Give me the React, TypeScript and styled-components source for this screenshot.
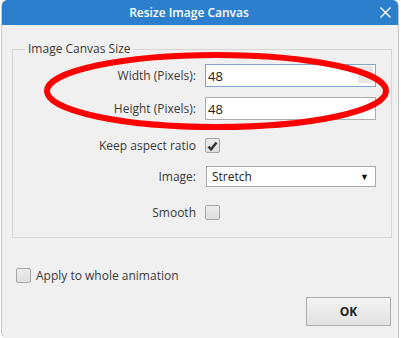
import React from "react";
import styled, { createGlobalStyle } from "styled-components";

const Global = createGlobalStyle`
  html, body { margin: 0; padding: 0; background: #ffffff; }
  body { font-family: "Open Sans", "Noto Sans", sans-serif; }
  * { box-sizing: border-box; }
`;

const Stage = styled.div`
  position: relative;
  width: 401px;
  height: 338px;
  overflow: hidden;
  background: #ffffff;
`;

const Window = styled.div`
  margin-left: 1px;
  width: 398px;
  height: 338px;
  background: #f0f0f0;
  border-left: 1px solid #c9c9c9;
  border-right: 1px solid #c4c4c4;
  border-radius: 6px 6px 0 6px;
  overflow: hidden;
  display: flex;
  flex-direction: column;
`;

const TitleBar = styled.div`
  height: 25px;
  background: #2b7fcd;
  display: flex;
  align-items: center;
  justify-content: center;
  position: relative;
  color: #ffffff;
  font-size: 12px;
  font-weight: 600;
  padding-right: 22px;
`;

const CloseButton = styled.div`
  position: absolute;
  right: 6px;
  top: 6px;
  width: 13px;
  height: 13px;
  display: flex;
`;

const Body = styled.div`
  flex: 1;
  display: flex;
  flex-direction: column;
  padding: 16px 0 0 10px;
  color: #3a3a3a;
  font-size: 12px;
`;

const Group = styled.fieldset`
  margin: 0;
  width: 380px;
  border: 1px solid #d6d6d6;
  padding: 7px 0 18px 0;
  display: flex;
  flex-direction: column;
`;

const Legend = styled.legend`
  margin-left: 12px;
  padding: 0 3px;
  line-height: 16px;
  font-size: 12px;
  color: #3a3a3a;
`;

const Row = styled.div<{ $mt: number; $h: number }>`
  display: grid;
  grid-template-columns: 183px 171px;
  column-gap: 9px;
  align-items: center;
  height: ${(p) => p.$h}px;
  margin-top: ${(p) => p.$mt}px;
`;

const Label = styled.div`
  text-align: right;
  white-space: nowrap;
`;

const TextBox = styled.div<{ $focused?: boolean }>`
  height: 23px;
  background: #ffffff;
  border: 1px solid ${(p) => (p.$focused ? "#7fa3d3" : "#acacac")};
  display: flex;
  align-items: center;
  padding-left: 2px;
  font-size: 13px;
  color: #222;
  position: relative;
`;

const Spin = styled.div`
  position: absolute;
  right: 2px;
  top: 1px;
  bottom: 3px;
  width: 15px;
  background: #e6e6e6;
  display: flex;
  align-items: center;
  justify-content: center;
`;

const Check = styled.div<{ $checked?: boolean }>`
  width: 15px;
  height: 15px;
  border: 1px solid #a5a5a5;
  border-radius: 2px;
  background: linear-gradient(#ececec, #dedede);
  display: flex;
  align-items: center;
  justify-content: center;
`;

const Select = styled.div`
  height: 21px;
  margin-left: 1px;
  width: 170px;
  background: #ffffff;
  border: 1px solid #a9a9a9;
  display: flex;
  align-items: center;
  justify-content: space-between;
  padding: 0 6px 0 5px;
  color: #222;
`;

const Arrow = styled.span`
  font-size: 9px;
  color: #111;
`;

const ApplyRow = styled.div`
  display: flex;
  align-items: center;
  gap: 5px;
  margin: 30px 0 0 4px;
  height: 15px;
`;

const Footer = styled.div`
  display: flex;
  justify-content: flex-end;
  margin-top: 14px;
  padding-right: 7px;
`;

const OkButton = styled.div`
  width: 85px;
  height: 29px;
  border: 1px solid #adadad;
  background: linear-gradient(#f3f3f3, #e2e2e2);
  display: flex;
  align-items: center;
  justify-content: center;
  font-weight: 700;
  font-size: 12px;
  color: #222;
`;

const Overlay = styled.svg`
  position: absolute;
  left: 0;
  top: 0;
  pointer-events: none;
`;

const CheckMark = () => (
  <svg width="11" height="10" viewBox="0 0 11 10">
    <path d="M1.5 5.5 L4 8.5 L9.5 1.5" fill="none" stroke="#333" strokeWidth="2.4" strokeLinejoin="round" />
  </svg>
);

export default function App() {
  return (
    <Stage>
      <Global />
      <Window>
        <TitleBar>
          Resize Image Canvas
          <CloseButton>
            <svg width="13" height="13" viewBox="0 0 13 13">
              <path d="M1.5 1.5 L11.5 11.5 M11.5 1.5 L1.5 11.5" stroke="#fff" strokeWidth="1.4" />
            </svg>
          </CloseButton>
        </TitleBar>
        <Body>
          <Group>
            <Legend>Image Canvas Size</Legend>
            <Row $mt={0} $h={23}>
              <Label>Width (Pixels):</Label>
              <TextBox $focused>
                48
                <Spin>
                  <svg width="7" height="5" viewBox="0 0 7 5">
                    <path d="M0 0 L7 0 L3.5 5 Z" fill="#555" />
                  </svg>
                </Spin>
              </TextBox>
            </Row>
            <Row $mt={10} $h={23}>
              <Label>Height (Pixels):</Label>
              <TextBox>48</TextBox>
            </Row>
            <Row $mt={17} $h={15}>
              <Label>Keep aspect ratio</Label>
              <Check $checked>
                <CheckMark />
              </Check>
            </Row>
            <Row $mt={14} $h={21}>
              <Label>Image:</Label>
              <Select>
                Stretch
                <Arrow>▼</Arrow>
              </Select>
            </Row>
            <Row $mt={17} $h={15}>
              <Label>Smooth</Label>
              <Check />
            </Row>
          </Group>
          <ApplyRow>
            <Check />
            Apply to whole animation
          </ApplyRow>
          <Footer>
            <OkButton>OK</OkButton>
          </Footer>
        </Body>
      </Window>
      <Overlay width="401" height="338" viewBox="0 0 401 338">
        <ellipse cx="216.5" cy="91" rx="169.5" ry="36" fill="none" stroke="#ff0000" strokeWidth="6" />
      </Overlay>
    </Stage>
  );
}
